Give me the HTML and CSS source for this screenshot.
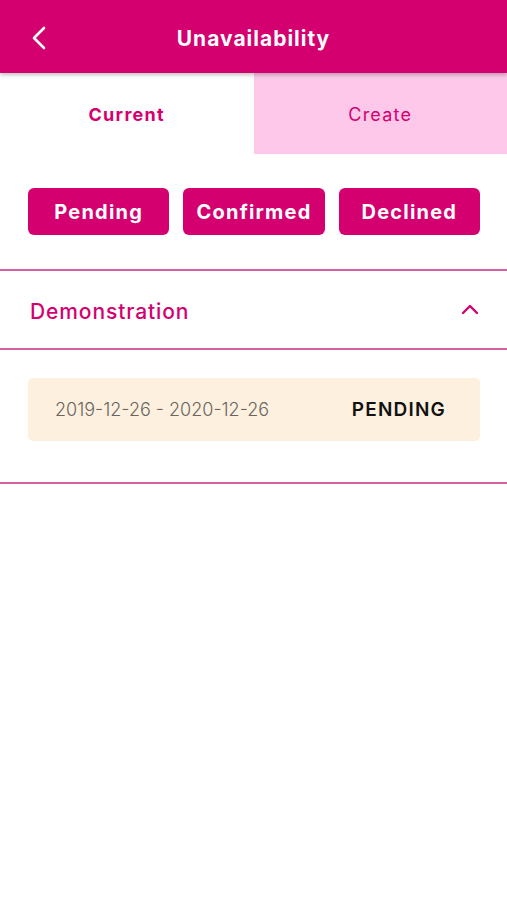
FILE: index.html
```html
<!DOCTYPE html>
<html>
<head>
  <title>Unavailability</title>
<link rel="stylesheet" href="styles.css">
</head>
<body>
  <header class="topbar">
    <a class="back" href="#">
      <svg width="16" height="24" viewBox="0 0 16 24">
        <path d="M13 2 L3 12 L13 22" fill="none" stroke="#fff" stroke-width="2.6" stroke-linecap="round" stroke-linejoin="round"/>
      </svg>
    </a>
    <h1 class="title">Unavailability</h1>
  </header>

  <nav class="tabs">
    <div class="tab active">Current</div>
    <div class="tab">Create</div>
  </nav>

  <div class="filters">
    <button class="filter">Pending</button>
    <button class="filter">Confirmed</button>
    <button class="filter">Declined</button>
  </div>

  <section class="group">
    <div class="group-head">
      <span class="group-name">Demonstration</span>
      <svg width="18" height="11" viewBox="0 0 18 11">
        <path d="M2 9 L9 2 L16 9" fill="none" stroke="#d4006f" stroke-width="2.4" stroke-linecap="round" stroke-linejoin="round"/>
      </svg>
    </div>
    <div class="group-body">
      <div class="entry">
        <span class="dates">2019-12-26 - 2020-12-26</span>
        <span class="status">PENDING</span>
      </div>
    </div>
  </section>
</body>
</html>
```

FILE: styles.css
```css
body {
  font-family: Inter, "Open Sans", sans-serif;
  background-color: #fff;
  margin: 0;
}

.topbar {
  height: 73px;
  background-color: #d4006f;
  display: flex;
  align-items: center;
  justify-content: center;
  position: relative;
  box-shadow: 0 2px 4px rgba(0, 0, 0, 0.25);
  z-index: 1;
}

.back {
  position: absolute;
  left: 31px;
  top: 26px;
  display: block;
  line-height: 0;
}

.title {
  margin: 3px 0 0;
  color: #fff;
  font-size: 21px;
  font-weight: 700;
  letter-spacing: 1px;
}

.tabs {
  display: flex;
  height: 81px;
}

.tab {
  flex: 1;
  display: flex;
  align-items: center;
  justify-content: center;
  padding-top: 1px;
  font-size: 18px;
  letter-spacing: 1.2px;
  color: #d4006f;
  background-color: #fdc8e9;
}

.tab.active {
  background-color: #fff;
  font-weight: 700;
  letter-spacing: 1.3px;
}

.filters {
  display: flex;
  gap: 14px;
  padding: 34px 27px 0 28px;
}

.filter {
  flex: 1;
  height: 47px;
  border: none;
  border-radius: 6px;
  background-color: #d4006f;
  color: #fff;
  font-family: inherit;
  font-size: 20px;
  font-weight: 700;
  letter-spacing: 1.2px;
  padding: 0;
}

.group {
  margin-top: 34px;
  border-top: 2px solid #d660a2;
  border-bottom: 2px solid #d660a2;
}

.group-head {
  height: 79px;
  display: flex;
  align-items: center;
  justify-content: space-between;
  padding: 3px 28px 0 30px;
  box-sizing: border-box;
  border-bottom: 2px solid #d660a2;
}

.group-name {
  color: #d4006f;
  font-size: 21px;
  font-weight: 500;
  letter-spacing: 0.9px;
}

.group-head svg {
  margin-top: -4px;
}

.group-body {
  padding: 28px 27px 41px 28px;
}

.entry {
  height: 63px;
  background-color: #fdf0de;
  border-radius: 5px;
  display: flex;
  align-items: center;
  justify-content: space-between;
  padding: 0 34px 0 27px;
}

.dates {
  color: #6b655f;
  font-size: 18px;
  font-weight: 300;
}

.status {
  color: #111;
  font-size: 19px;
  font-weight: 600;
  letter-spacing: 1.2px;
}
```
